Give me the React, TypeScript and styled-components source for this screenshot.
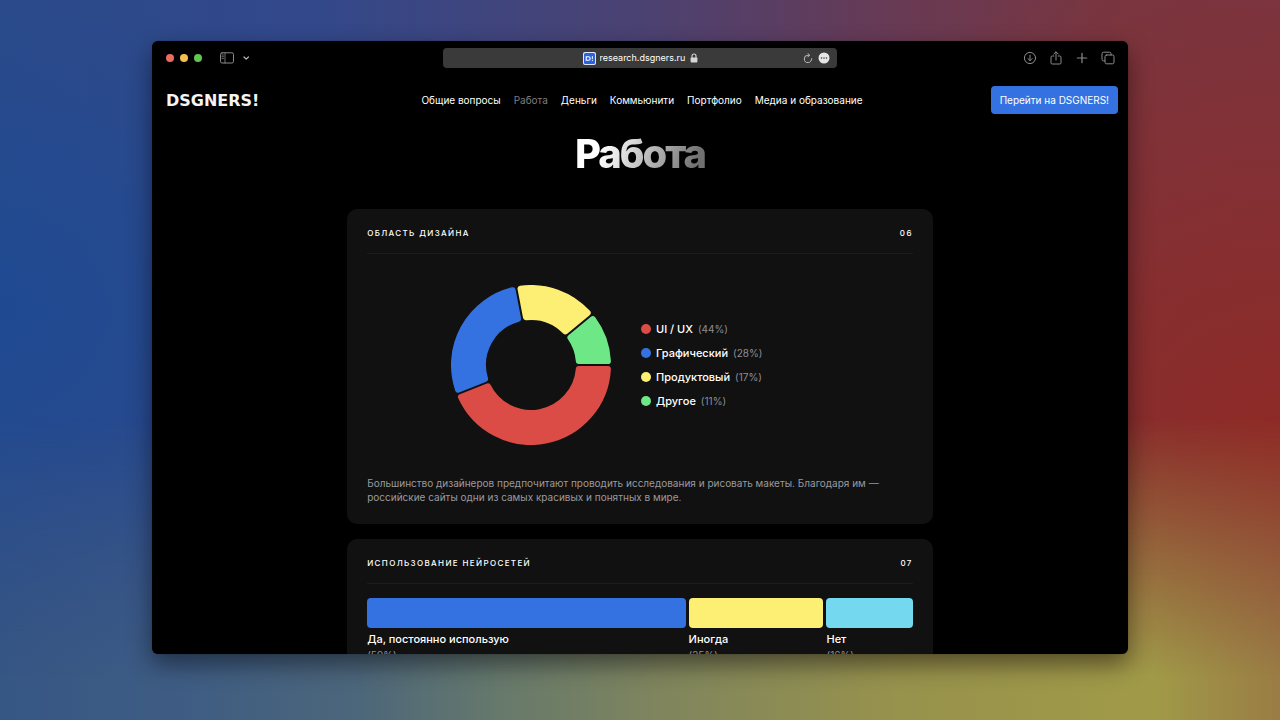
import React from "react";
import styled, { createGlobalStyle } from "styled-components";

const GlobalStyle = createGlobalStyle`
  *, *::before, *::after { box-sizing: border-box; }
  body { margin: 0; font-family: Inter, "Liberation Sans", sans-serif; -webkit-font-smoothing: antialiased; }
  h1, h2, p, ul, figure { margin: 0; padding: 0; }
  ul { list-style: none; }
  button, input { font: inherit; color: inherit; border: 0; padding: 0; background: none; }
`;

const Desktop = styled.div`
  position: relative;
  isolation: isolate;
  height: 100vh;
  display: flex;
  padding: 41px 152px 66px;
  background:
    radial-gradient(ellipse 45% 70% at 100% 62%, #8f2a26 0%, #8f2a2600 100%),
    radial-gradient(ellipse 30% 45% at 0% 43%, #1f4a92 0%, #1f4a9200 100%),
    linear-gradient(90deg, #2b4a8a 0%, #33488a 25%, #4b4272 50%, #683a54 70%, #783640 88%, #7a3540 100%);

  &::before {
    content: "";
    position: absolute;
    inset: 0;
    z-index: -1;
    background: linear-gradient(90deg, #365684 0%, #3f5d83 15%, #4c667a 28%, #66796c 39%, #80855c 52%, #97924c 70%, #a09a48 90%, #9a7c44 100%);
    mask-image: linear-gradient(180deg, transparent 58%, black 94%);
  }
`;

const BrowserWindow = styled.div`
  flex: 1;
  min-width: 0;
  display: flex;
  flex-direction: column;
  overflow: hidden;
  border-radius: 6px;
  background: #000;
  color: #fff;
  box-shadow: 0 0 1px #0008, 0 10px 24px #0007;
`;

const Toolbar = styled.div`
  flex: none;
  display: grid;
  grid-template-columns: 1fr minmax(0, 394px) 1fr;
  align-items: center;
  height: 34px;
`;

const ToolGroup = styled.div<{ $end?: boolean }>`
  display: flex;
  align-items: center;
  padding: 0 13px 0 14px;
  gap: ${(p) => (p.$end ? 12 : 6)}px;
  justify-content: ${(p) => (p.$end ? "flex-end" : "flex-start")};
`;

const TrafficLight = styled.button<{ $color: string }>`
  width: 8px;
  height: 8px;
  border-radius: 50%;
  background: ${(p) => p.$color};
`;

const ToolButton = styled.button<{ $tone?: string }>`
  display: flex;
  color: ${(p) => p.$tone ?? "#8a8a8a"};
`;

const SidebarTools = styled.div`
  display: flex;
  align-items: center;
  gap: 8px;
  margin-left: 12px;
`;

const AddressBar = styled.div`
  display: grid;
  grid-template-columns: 1fr auto 1fr;
  align-items: center;
  height: 20px;
  padding: 0 7px;
  border-radius: 4px;
  background: #3a3a3a;
`;

const Address = styled.label`
  grid-column: 2;
  display: flex;
  align-items: center;
  gap: 4px;
`;

const AddressInput = styled.input`
  width: 86px;
  height: 16px;
  font-size: 9px;
  line-height: 16px;
  outline: none;
`;

const AddressActions = styled.div`
  display: flex;
  align-items: center;
  justify-content: flex-end;
  gap: 5px;
`;

const Page = styled.div`
  flex: 1;
  min-height: 0;
  overflow-y: auto;
  scrollbar-width: none;
`;

const SiteHeader = styled.header`
  display: grid;
  grid-template-columns: 1fr auto 1fr;
  align-items: center;
  padding: 11px 10px 11px 14px;
`;

const Logo = styled.a`
  justify-self: start;
  padding-top: 2px;
  font: 700 16px/26px "DejaVu Sans", sans-serif;
  color: #f4f4f4;
  text-decoration: none;
`;

const Nav = styled.nav`
  display: flex;
  gap: 13px;
`;

const NavLink = styled.a<{ $active?: boolean }>`
  font-size: 10px;
  line-height: 14px;
  white-space: nowrap;
  text-decoration: none;
  color: ${(p) => (p.$active ? "#7d7d82" : "#fff")};
`;

const CtaButton = styled.button`
  justify-self: end;
  height: 28px;
  padding: 0 9px;
  border-radius: 4px;
  background: #3572e1;
  font-size: 10px;
  line-height: 14px;
  white-space: nowrap;
`;

const Main = styled.main`
  display: flex;
  flex-direction: column;
  gap: 15px;
  width: 60%;
  margin: 0 auto;
  padding-bottom: 40px;
`;

const Title = styled.h1`
  align-self: center;
  margin-bottom: 11px;
  font-size: 40px;
  line-height: 58px;
  font-weight: 800;
  letter-spacing: -2px;
  color: transparent;
  background: linear-gradient(110deg, #fff 20%, #e8e8e8 35%, #707070 90%);
  background-clip: text;
`;

const Card = styled.section`
  padding: 16px 20px 20px;
  border-radius: 10px;
  background: #111;
`;

const CardHeader = styled.header`
  display: flex;
  justify-content: space-between;
  padding-bottom: 12px;
  border-bottom: 1px solid #1c1c1c;
`;

const CardTitle = styled.h2`
  font-size: 8px;
  line-height: 16px;
  font-weight: 500;
  letter-spacing: 0.17em;
  text-transform: uppercase;
  color: #fff;
`;

const ChartRow = styled.figure`
  display: flex;
  align-items: center;
  justify-content: center;
  gap: 30px;
  padding: 31px 0;
`;

const Legend = styled.ul`
  display: flex;
  flex-direction: column;
  gap: 8px;
  min-width: 188px;
`;

const LegendItem = styled.li`
  display: flex;
  align-items: center;
  gap: 5px;
  font-size: 11px;
  line-height: 16px;
  font-weight: 500;
`;

const Dot = styled.span<{ $color: string }>`
  width: 10px;
  height: 10px;
  border-radius: 50%;
  background: ${(p) => p.$color};
`;

const Share = styled.span`
  font-size: 10px;
  line-height: 16px;
  font-weight: 400;
  color: #8e8e93;
`;

const Note = styled.p`
  font-size: 10px;
  line-height: 14px;
  color: #9a9a9f;
`;

const Bars = styled.ul`
  display: flex;
  gap: 3px;
  padding-top: 14px;
`;

const BarItem = styled.li<{ $share: number }>`
  flex: ${(p) => p.$share} 1 0;
  min-width: 0;
  display: flex;
  flex-direction: column;
`;

const Bar = styled.span<{ $color: string }>`
  height: 30px;
  border-radius: 4px;
  background: ${(p) => p.$color};
`;

const BarLabel = styled.span`
  padding-top: 3px;
  font-size: 11px;
  line-height: 16px;
  font-weight: 500;
  white-space: nowrap;
`;

type Slice = { label: string; value: number; color: string };

const areas: Slice[] = [
  { label: "UI / UX", value: 44, color: "#dc4c46" },
  { label: "Графический", value: 28, color: "#3572e1" },
  { label: "Продуктовый", value: 17, color: "#fdee74" },
  { label: "Другое", value: 11, color: "#6ee787" },
];

const usage: Slice[] = [
  { label: "Да, постоянно использую", value: 59, color: "#3572e1" },
  { label: "Иногда", value: 25, color: "#fdee74" },
  { label: "Нет", value: 16, color: "#74d9ee" },
];

const OUTER = 80;
const INNER = 45;
const ROUND = 3;
const HALF_GAP = 1;

/* A ring segment inset by ROUND; its own round-joined stroke gives the soft corners. */
function slicePath(from: number, to: number) {
  const ro = OUTER - ROUND;
  const ri = INNER + ROUND;
  const d = HALF_GAP + ROUND;
  const a = from * Math.PI * 2;
  const b = to * Math.PI * 2;
  const pt = (r: number, t: number) => `${r * Math.cos(t)} ${r * Math.sin(t)}`;
  const oo = Math.asin(d / ro);
  const oi = Math.asin(d / ri);
  const large = to - from > 0.5 ? 1 : 0;
  return `M${pt(ro, a + oo)}A${ro} ${ro} 0 ${large} 1 ${pt(ro, b - oo)}L${pt(ri, b - oi)}A${ri} ${ri} 0 ${large} 0 ${pt(ri, a + oi)}Z`;
}

function Donut({ data }: { data: Slice[] }) {
  let start = 0;
  return (
    <svg width="160" height="160" viewBox="-80 -80 160 160" aria-hidden="true">
      {data.map((s) => {
        const from = start;
        start += s.value / 100;
        return (
          <path key={s.label} d={slicePath(from, start)} fill={s.color} stroke={s.color} strokeWidth={ROUND * 2} strokeLinejoin="round" />
        );
      })}
    </svg>
  );
}

const line = { fill: "none", stroke: "currentColor", strokeLinecap: "round", strokeLinejoin: "round" } as const;

const SidebarIcon = () => (
  <svg width="14" height="12" viewBox="0 0 14 12" {...line}>
    <rect x="0.5" y="0.8" width="13" height="10.2" rx="1.6" />
    <path d="M5 1v10M2 3h1.4M2 4.7h1.4M2 6.4h1.4" strokeWidth="0.8" />
  </svg>
);

const ChevronIcon = () => (
  <svg width="8" height="6" viewBox="0 0 8 6" {...line} strokeWidth="1.2">
    <path d="M2 2l2.2 2.2L6.4 2" />
  </svg>
);

const LockIcon = () => (
  <svg width="8" height="10" viewBox="0 0 8 10" fill="none">
    <path d="M2 5V3a2 2 0 0 1 4 0v2" stroke="#d6d6d6" strokeWidth="1.1" />
    <rect x="0.6" y="4.4" width="6.8" height="5" rx="0.9" fill="#d6d6d6" />
  </svg>
);

const FaviconIcon = () => (
  <svg width="13" height="13" viewBox="0 0 13 13">
    <rect width="13" height="13" rx="2" fill="#dfe8fb" />
    <rect x="1" y="1" width="11" height="11" rx="1.5" fill="#2c62dd" />
    <path d="M3.2 4.7h2.2a1.8 1.8 0 0 1 0 3.6H3.2zM9.4 4.2v2.6M9.4 7.7v1" fill="none" stroke="#fff" strokeWidth="1.1" />
  </svg>
);

const ReloadIcon = () => (
  <svg width="10" height="11" viewBox="0 0 10 11" {...line} strokeWidth="0.9">
    <path d="M8.7 5.6A3.7 3.7 0 1 1 5 2.2h1.3M4.9 0.6l1.7 1.6-1.7 1.7" />
  </svg>
);

const MoreIcon = () => (
  <svg width="12" height="12" viewBox="0 0 12 12">
    <circle cx="6" cy="6" r="5.5" fill="#e6e6e6" />
    <circle cx="3.5" cy="6" r="0.8" fill="#3a3a3a" />
    <circle cx="6" cy="6" r="0.8" fill="#3a3a3a" />
    <circle cx="8.5" cy="6" r="0.8" fill="#3a3a3a" />
  </svg>
);

const DownloadIcon = () => (
  <svg width="14" height="14" viewBox="0 0 14 14" {...line}>
    <circle cx="7" cy="7" r="5.6" />
    <path d="M7 4.2v5.4M4.9 7.6L7 9.7l2.1-2.1" />
  </svg>
);

const ShareIcon = () => (
  <svg width="14" height="14" viewBox="0 0 14 14" {...line}>
    <path d="M4.8 5H3.2a1.2 1.2 0 0 0-1.2 1.2v5.6A1.2 1.2 0 0 0 3.2 13h7.6a1.2 1.2 0 0 0 1.2-1.2V6.2A1.2 1.2 0 0 0 10.8 5H9.2M7 9V1M4.8 3L7 .8 9.2 3" />
  </svg>
);

const PlusIcon = () => (
  <svg width="14" height="14" viewBox="0 0 14 14" {...line} strokeWidth="1.2">
    <path d="M7 2.3v9.4M2.3 7h9.4" />
  </svg>
);

const TabsIcon = () => (
  <svg width="14" height="14" viewBox="0 0 14 14" {...line}>
    <rect x="4" y="4" width="9" height="8.8" rx="1.5" />
    <path d="M3.9 9.9H2.5A1.5 1.5 0 0 1 1 8.4V2.7a1.5 1.5 0 0 1 1.5-1.5h6a1.5 1.5 0 0 1 1.5 1.5V4" />
  </svg>
);

const links = ["Общие вопросы", "Работа", "Деньги", "Коммьюнити", "Портфолио", "Медиа и образование"];

export default function App() {
  return (
    <>
      <GlobalStyle />
      <Desktop>
        <BrowserWindow>
          <Toolbar>
            <ToolGroup>
              <TrafficLight $color="#ed6a5e" aria-label="Закрыть" />
              <TrafficLight $color="#f5bf4f" aria-label="Свернуть" />
              <TrafficLight $color="#61c554" aria-label="Развернуть" />
              <SidebarTools>
                <ToolButton aria-label="Боковая панель"><SidebarIcon /></ToolButton>
                <ToolButton $tone="#b8b8b8" aria-label="Группы вкладок"><ChevronIcon /></ToolButton>
              </SidebarTools>
            </ToolGroup>
            <AddressBar>
              <Address>
                <FaviconIcon />
                <AddressInput aria-label="Адрес" defaultValue="research.dsgners.ru" />
                <LockIcon />
              </Address>
              <AddressActions>
                <ToolButton $tone="#c8c8c8" aria-label="Обновить"><ReloadIcon /></ToolButton>
                <ToolButton aria-label="Ещё"><MoreIcon /></ToolButton>
              </AddressActions>
            </AddressBar>
            <ToolGroup $end>
              <ToolButton aria-label="Загрузки"><DownloadIcon /></ToolButton>
              <ToolButton aria-label="Поделиться"><ShareIcon /></ToolButton>
              <ToolButton aria-label="Новая вкладка"><PlusIcon /></ToolButton>
              <ToolButton aria-label="Все вкладки"><TabsIcon /></ToolButton>
            </ToolGroup>
          </Toolbar>
          <Page>
            <SiteHeader>
              <Logo href="#">DSGNERS!</Logo>
              <Nav>
                {links.map((l) => (
                  <NavLink key={l} href="#" $active={l === "Работа"}>{l}</NavLink>
                ))}
              </Nav>
              <CtaButton>Перейти на DSGNERS!</CtaButton>
            </SiteHeader>
            <Main>
              <Title>Работа</Title>
              <Card>
                <CardHeader>
                  <CardTitle>Область дизайна</CardTitle>
                  <CardTitle as="span">06</CardTitle>
                </CardHeader>
                <ChartRow>
                  <Donut data={areas} />
                  <Legend>
                    {areas.map((s) => (
                      <LegendItem key={s.label}>
                        <Dot $color={s.color} />
                        {s.label}
                        <Share>({s.value}%)</Share>
                      </LegendItem>
                    ))}
                  </Legend>
                </ChartRow>
                <Note>
                  Большинство дизайнеров предпочитают проводить исследования и рисовать макеты. Благодаря им —
                  российские сайты одни из самых красивых и понятных в мире.
                </Note>
              </Card>
              <Card>
                <CardHeader>
                  <CardTitle>Использование нейросетей</CardTitle>
                  <CardTitle as="span">07</CardTitle>
                </CardHeader>
                <Bars>
                  {usage.map((s) => (
                    <BarItem key={s.label} $share={s.value}>
                      <Bar $color={s.color} />
                      <BarLabel>{s.label}</BarLabel>
                      <Share>({s.value}%)</Share>
                    </BarItem>
                  ))}
                </Bars>
              </Card>
            </Main>
          </Page>
        </BrowserWindow>
      </Desktop>
    </>
  );
}
